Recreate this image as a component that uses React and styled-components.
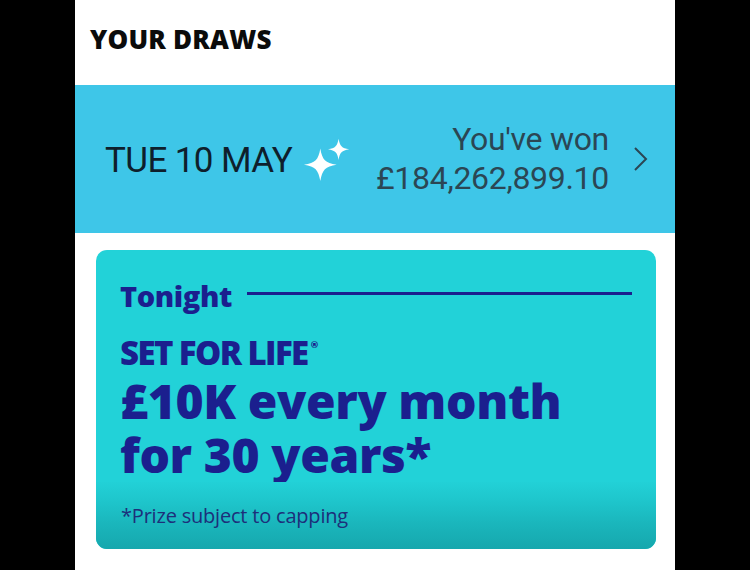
import styled, { createGlobalStyle } from 'styled-components';

const GlobalStyle = createGlobalStyle`
  html, body {
    margin: 0;
    padding: 0;
    background: #000;
  }
  body {
    font-family: "Open Sans", sans-serif;
  }
`;

const Screen = styled.div`
  width: 600px;
  height: 570px;
  margin: 0 auto;
  background: #fff;
  overflow: hidden;
`;

const Header = styled.h2`
  margin: 0;
  height: 85px;
  padding: 21px 0 0 15px;
  box-sizing: border-box;
  font-family: "Open Sans", sans-serif;
  font-weight: 800;
  font-size: 26px;
  letter-spacing: 0.2px;
  color: #0b0b0b;
`;

const DrawRow = styled.div`
  height: 148px;
  background: #3ec6e8;
  display: flex;
  align-items: center;
  padding: 0 26px 0 30px;
  box-sizing: border-box;
  font-family: "Roboto", sans-serif;
`;

const DrawDate = styled.div`
  font-size: 35px;
  color: #0e1f2c;
  letter-spacing: -0.6px;
  margin-top: 2px;
`;

const Sparkles = styled.svg`
  width: 50px;
  height: 50px;
  margin-left: 11px;
  margin-top: -2px;
`;

const Winnings = styled.div`
  margin-left: auto;
  text-align: right;
  color: #2b4654;
  font-size: 32px;
  line-height: 39px;
  letter-spacing: -0.3px;
`;

const Chevron = styled.svg`
  width: 16px;
  height: 26px;
  margin-left: 24px;
`;

const Card = styled.div`
  margin: 17px 19px 0 21px;
  height: 299px;
  border-radius: 11px;
  background: #22d2d8;
  display: flex;
  flex-direction: column;
  overflow: hidden;
  color: #1b1f8e;
  font-family: "Open Sans", sans-serif;
`;

const CardBody = styled.div`
  flex: 1;
  padding: 26px 24px 0 24px;
`;

const TitleRow = styled.div`
  display: flex;
  align-items: center;
  gap: 15px;
  font-weight: 800;
  font-size: 29px;
  letter-spacing: -0.4px;
`;

const Rule = styled.div`
  flex: 1;
  height: 3px;
  background: #1b1f8e;
  margin-top: -4px;
`;

const Brand = styled.div`
  margin-top: 15px;
  font-weight: 800;
  font-size: 33px;
  letter-spacing: -1.6px;
  sup {
    font-size: 9px;
    vertical-align: top;
    letter-spacing: 0;
    margin-left: 3px;
    position: relative;
    top: 8px;
  }
`;

const Prize = styled.div`
  margin-top: -1px;
  font-weight: 800;
  font-size: 48px;
  line-height: 54px;
  letter-spacing: -0.4px;
`;

const Footer = styled.div`
  height: 68px;
  padding: 20px 24px 0 25px;
  box-sizing: border-box;
  background: linear-gradient(180deg, #22d1d7 0%, #1ec5cb 30%, #1ab6bc 62%, #16a7ad 100%);
  font-family: "Open Sans", sans-serif;
  font-size: 20px;
  color: #1d2f7a;
  letter-spacing: -0.2px;
`;

const Star = ({ cx, cy, r }) => (
  <path
    transform={`translate(${cx} ${cy}) scale(${r})`}
    d="M0 -1 C0.12 -0.3 0.3 -0.12 1 0 C0.3 0.12 0.12 0.3 0 1 C-0.12 0.3 -0.3 0.12 -1 0 C-0.3 -0.12 -0.12 -0.3 0 -1 Z"
    fill="#fff"
  />
);

export default function App() {
  return (
    <>
      <GlobalStyle />
      <Screen>
        <Header>YOUR DRAWS</Header>
        <DrawRow>
          <DrawDate>TUE 10 MAY</DrawDate>
          <Sparkles viewBox="0 0 52 52">
            <Star cx={18} cy={33} r={17} />
            <Star cx={37} cy={17} r={11} />
          </Sparkles>
          <Winnings>
            <div>You've won</div>
            <div>£184,262,899.10</div>
          </Winnings>
          <Chevron viewBox="0 0 16 26">
            <path d="M2 2 L13 13 L2 24" fill="none" stroke="#2b4654" strokeWidth="2" />
          </Chevron>
        </DrawRow>
        <Card>
          <CardBody>
            <TitleRow>
              Tonight
              <Rule />
            </TitleRow>
            <Brand>
              SET FOR LIFE<sup>®</sup>
            </Brand>
            <Prize>
              £10K every month
              <br />
              for 30 years*
            </Prize>
          </CardBody>
          <Footer>*Prize subject to capping</Footer>
        </Card>
      </Screen>
    </>
  );
}
